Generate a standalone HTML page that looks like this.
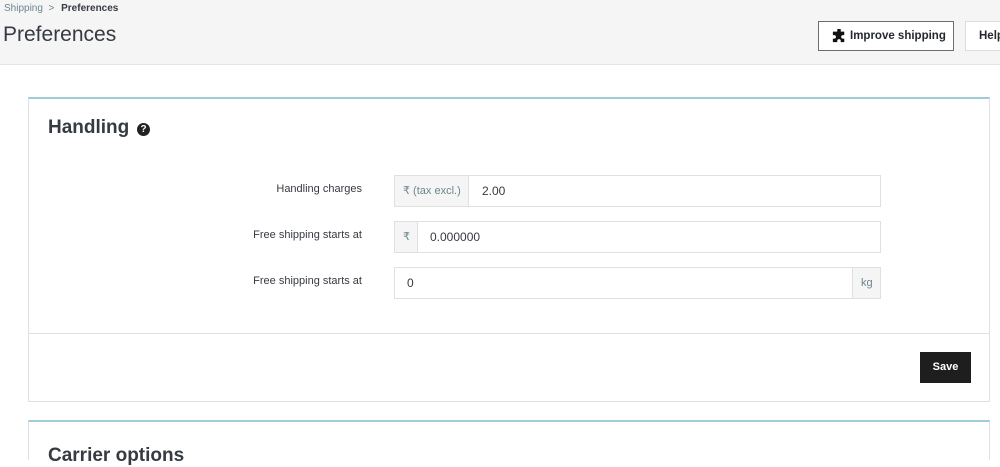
<!DOCTYPE html>
<html><head><meta charset="utf-8"><style>
*{box-sizing:border-box;margin:0;padding:0}
body{width:1000px;height:447px;overflow:hidden;background:#fff;font-family:"Liberation Sans",sans-serif;color:#363a41;position:relative}
.hdr{position:absolute;left:0;top:0;width:1000px;height:65px;background:#f5f5f5;border-bottom:1px solid #e5e5e5}
.bc{position:absolute;left:4px;top:3px;font-size:10px;color:#6c868e}
.bc b{color:#363a41;margin-left:4px}
.ttl{position:absolute;left:3px;top:23px;font-size:21px;color:#363a41}
.btn{position:absolute;top:21px;height:30px;background:#fff;border:1px solid #6c6c6c;font-size:11.5px;font-weight:bold;color:#25292d;line-height:28px}
.card{position:absolute;left:28px;width:962px;border:1px solid #e0e0e0;border-top:2px solid #9fcbdb;background:#fff}
.lbl{position:absolute;right:638px;font-size:11px;color:#363a41}
.inp{position:absolute;left:394px;width:487px;height:32px;border:1px solid #e0e0e0;font-size:12px;color:#363a41}
.add{position:absolute;top:0;bottom:0;background:#f5f5f5;border-right:1px solid #e0e0e0;color:#6c868e;font-size:11px;line-height:30px;padding-left:8px}
</style></head><body>
<div class="hdr">
<div class="bc">Shipping &nbsp;&gt; <b>Preferences</b></div>
<div class="ttl">Preferences</div>
<div class="btn" style="left:818px;width:136px;padding-left:13px">
<svg width="14" height="14" viewBox="0 0 16 16" style="position:absolute;left:13px;top:7px"><path fill="#111" d="M6 1a2 2 0 0 1 4 0v2h4v4h-1.5a2 2 0 1 0 0 4H14v4H10v-1.5a2 2 0 1 0-4 0V15H1v-4h1.5a2 2 0 1 0 0-4H1V3h5z"/></svg>
<span style="margin-left:18px">Improve shipping</span></div>
<div class="btn" style="left:965px;width:60px;padding-left:13px;border-color:#ddd">Help</div>
</div>
<div class="card" style="top:97px;height:305px">
<div style="position:absolute;left:19px;top:18px;font-size:19px;font-weight:bold;color:#363a41">Handling</div>
<div style="position:absolute;left:108px;top:24px;width:13px;height:13px;border-radius:50%;background:#222;color:#fff;font-size:10px;font-weight:bold;text-align:center;line-height:13px">?</div>
<div style="position:absolute;left:0;right:0;top:234px;border-top:1px solid #e0e0e0"></div>
<div style="position:absolute;left:891px;top:253px;width:51px;height:31px;background:#1e1e1e;color:#fff;font-size:11px;font-weight:bold;text-align:center;line-height:31px">Save</div>
</div>
<div class="lbl" style="top:183px">Handling charges</div>
<div class="lbl" style="top:229px">Free shipping starts at</div>
<div class="lbl" style="top:275px">Free shipping starts at</div>
<div class="inp" style="top:175px"><div class="add" style="left:0;width:74px">₹ (tax excl.)</div><span style="position:absolute;left:87px;top:8px">2.00</span></div>
<div class="inp" style="top:221px"><div class="add" style="left:0;width:23px">₹</div><span style="position:absolute;left:35px;top:8px">0.000000</span></div>
<div class="inp" style="top:267px"><span style="position:absolute;left:12px;top:8px">0</span><div class="add" style="right:0;width:28px;border-right:none;border-left:1px solid #e0e0e0">kg</div></div>
<div class="card" style="top:420px;height:40px;border-bottom:none">
<div style="position:absolute;left:19px;top:23px;font-size:19px;font-weight:bold;color:#363a41">Carrier options</div>
</div>
</body></html>
